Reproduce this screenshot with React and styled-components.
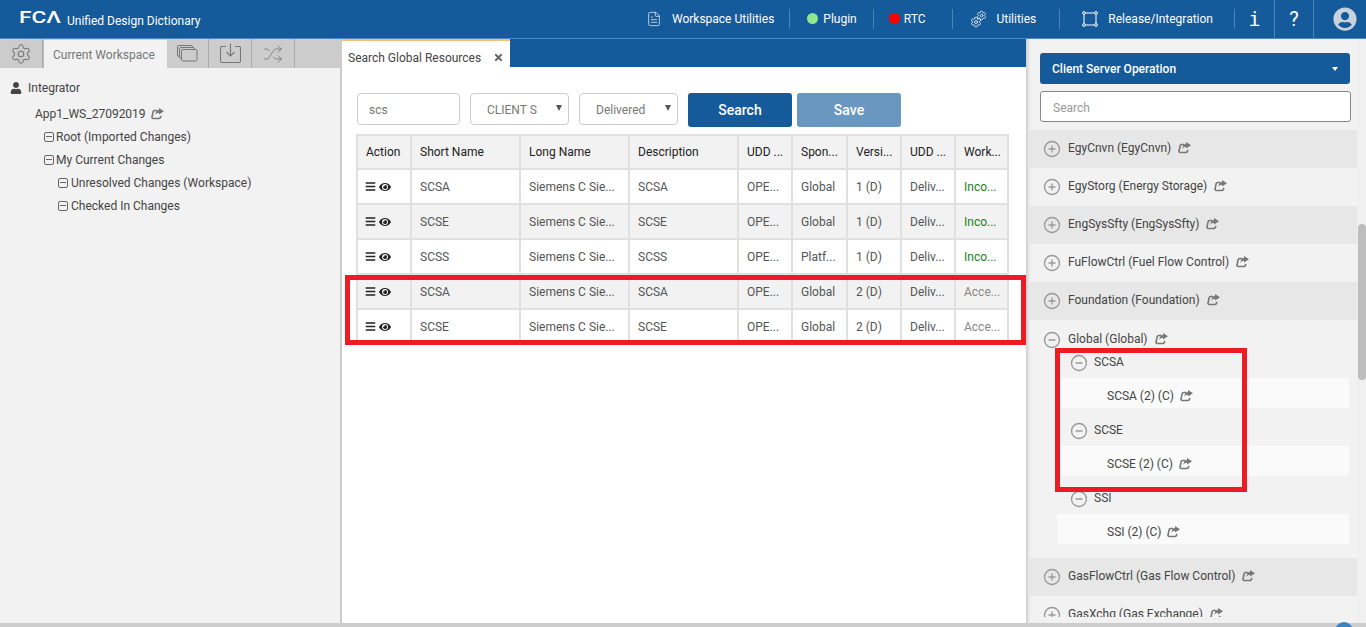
import React from "react";
import styled, { createGlobalStyle } from "styled-components";
import { FaUser, FaEye, FaBars, FaTimes, FaUserCircle } from "react-icons/fa";
import { Settings, Shuffle, FileText, CirclePlus, CircleMinus } from "lucide-react";

const Global = createGlobalStyle`
  html, body { margin: 0; padding: 0; height: 100%; overflow: hidden; }
  body { font-family: Roboto, "Liberation Sans", sans-serif; font-size: 12px; color: #333; background: #f2f2f2; }
  #root { height: 100%; }
  * { box-sizing: border-box; }
`;

const Page = styled.div`display: flex; flex-direction: column; height: 627px; position: relative; overflow: hidden;`;

const Header = styled.header`
  height: 39px; flex: none; background: #155a9a; border-bottom: 1px solid #4b8ac6;
  display: flex; align-items: stretch; color: #fff;
`;
const Brand = styled.div`display: flex; align-items: center; padding: 0 0 0 19px; gap: 7px;`;
const Logo = styled.span`font: 500 16px/1 Roboto, sans-serif; transform: scaleX(1.42); transform-origin: left; width: 41px; margin-top: -3px; white-space: nowrap;`;
const BrandName = styled.span`font-size: 12px; margin-top: 3px;`;
const Nav = styled.nav`margin-left: auto; display: flex; align-items: center; height: 38px;`;
const NavItem = styled.div`
  display: flex; align-items: center; height: 20px; gap: ${p => p.$gap || 5}px; padding: 0 ${p => p.$right}px 0 ${p => p.$left}px;
  border-right: 1px solid #4b84bb; font-size: 12px; white-space: nowrap; margin-top: -1px;
`;
const TallItem = styled.div`
  display: flex; align-items: center; justify-content: center; height: 38px; width: ${p => p.$w}px;
  padding-left: ${p => p.$pl || 0}px;
  border-right: 1px solid ${p => p.$noLine ? "transparent" : "#4b84bb"};
  font: 400 20px/1 ${p => p.$mono ? '"DejaVu Sans Mono", monospace' : 'Roboto, sans-serif'};
`;
const Dot = styled.span`width: 11px; height: 11px; border-radius: 50%; background: ${p => p.$c};`;
const CogPair = styled.span`
  position: relative; width: 17px; height: 18px; flex: none;
  svg { position: absolute; }
  svg:first-child { left: 0; bottom: 0; }
  svg:last-child { right: 0; top: 0; }
`;

const Main = styled.main`flex: 1; min-height: 0; display: flex;`;

const Left = styled.aside`width: 340px; flex: none; background: #f2f2f2; display: flex; flex-direction: column;`;
const LeftTabs = styled.div`height: 29px; flex: none; background: #ccc; display: flex;`;
const IconTab = styled.div`
  width: ${p => p.$w}px; display: flex; align-items: center; justify-content: center; color: #777;
  border-right: 1px solid #aaa;
`;
const ActiveTab = styled.div`
  width: 124px; background: #f2f2f2; border-top: 1px solid #f5c98a; border-left: 1px solid #bbb; color: #777;
  display: flex; align-items: center; padding: 2px 0 0 9px; font-size: 12px;
`;
const Tree = styled.div`padding-top: 8px; color: #444;`;
const TreeRow = styled.div`display: flex; align-items: center; height: 23px; padding-left: ${p => p.$indent}px; gap: ${p => p.$gap || 2}px; margin-bottom: ${p => p.$mb || 0}px;`;
const Box = styled.span`
  width: 10px; height: 10px; border: 1px solid #666; border-radius: 2px; position: relative; flex: none; margin-top: 1px;
  &::after { content: ""; position: absolute; left: 1px; right: 1px; top: 3px; height: 1px; background: #666; }
`;

const Center = styled.section`width: 686px; flex: none; background: #fff; border-left: 2px solid #ccc; display: flex; flex-direction: column;`;
const CenterTabs = styled.div`height: 28px; flex: none; background: #155a9a; display: flex;`;
const CenterTab = styled.div`
  width: 168px; background: #fff; border-top: 2px solid #f9bf6d; display: flex; align-items: center; padding: 7px 6px 0 6px;
  justify-content: space-between; color: #444;
`;
const Close = styled(FaTimes)`width: 11px; height: 11px; color: #666;`;
const Form = styled.div`display: flex; margin: 26px 0 0 15px; height: 32px;`;
const Field = styled.div`
  width: ${p => p.$w}px; margin-right: ${p => p.$mr}px; height: 32px; border: 1px solid #ccc; border-radius: 4px;
  display: flex; align-items: center; justify-content: space-between; padding: 2px 6px 0 ${p => p.$pl}px; color: #777; font-size: 12px;
`;
const Arrow = styled.span`width: 0; height: 0; border-left: 3px solid transparent; border-right: 3px solid transparent; border-top: 6px solid #555; margin-top: -4px;`;
const Btn = styled.button`
  width: 104px; height: 34px; margin-right: 5px; border: 0; border-radius: 3px; color: #fff; font: 500 14px Roboto, sans-serif;
  background: ${p => p.$off ? "#6a97bf" : "#155a9a"};
`;
const Table = styled.table`
  margin: 9px 0 0 14px; width: 651px; table-layout: fixed; border-collapse: collapse; font-size: 12px;
  th, td { border: 2px solid #e0e0e0; height: 35px; padding: 0 8px; text-align: left; white-space: nowrap; overflow: hidden; }
  th { background: #f2f2f2; color: #222; font-weight: 400; height: 34px; }
  td { color: #555; }
  td:first-child { padding-left: 7px; }
  tbody tr:nth-child(even) td { background: #f2f2f2; }
`;
const Status = styled.span`color: ${p => p.$ok ? "#1c801c" : "#888"};`;
const ActionIcons = styled.span`display: flex; align-items: center; gap: 3px; color: #222;`;

const Right = styled.aside`flex: 1; min-width: 0; background: #f2f2f2; position: relative; overflow: hidden; box-shadow: inset 4px 0 3px -2px #ccc;`;
const Drop = styled.div`
  margin: 14px 0 0 14px; width: 310px; height: 31px; background: #155a9a; border-radius: 3px; color: #fff; font-weight: 500;
  display: flex; align-items: center; justify-content: space-between; padding: 0 12px;
`;
const DropArrow = styled.span`width: 0; height: 0; border-left: 3px solid transparent; border-right: 3px solid transparent; border-top: 4px solid #fff;`;
const SearchBox = styled.div`
  margin: 7px 0 0 14px; width: 311px; height: 31px; background: #fff; border: 1px solid #888; border-radius: 3px;
  display: flex; align-items: center; padding: 2px 0 0 12px; color: #999;
`;
const List = styled.div`margin: 8px 9px 0 3px; color: #444; height: 487px; overflow: hidden;`;
const Row = styled.div`
  height: 38px; display: flex; align-items: center; padding: 0 0 3px 14px; gap: 7px; margin-top: ${p => p.$mt || 0}px;
  background: ${p => p.$dark ? "#e6e7e6" : "transparent"};
`;
const GlobalHead = styled.div`height: 28px; padding: 10px 0 0 14px; display: flex; align-items: center; gap: 7px;`;
const Child = styled.div`height: 30px; margin-left: 28px; padding: 0 0 2px 13px; display: flex; align-items: center; gap: 6px;`;
const Sub = styled.div`height: 30px; margin: 0 8px 8px 28px; background: #fafafa; padding: 6px 0 0 50px; display: flex; align-items: center; gap: 6px;`;
const Plus = styled(CirclePlus)`width: 18px; height: 18px; color: #999; flex: none; margin-top: 2px;`;
const Minus = styled(CircleMinus)`width: 18px; height: 18px; color: #999; flex: none; margin-top: 2px;`;
const ScrollThumb = styled.div`position: absolute; right: 0; top: 185px; width: 8px; height: 156px; background: #bdbdbd; border-radius: 4px;`;
const ScrollTrack = styled.div`position: absolute; right: 0; top: 0; bottom: 0; width: 9px; background: #f0f0f0;`;

const Footer = styled.div`height: 4px; flex: none; background: #ccc;`;
const Peek = styled.div`position: absolute; left: 1335px; top: 622px; width: 18px; height: 18px; border-radius: 50%; background: #3d83c4;`;
const Mark = styled.div`position: absolute; left: ${p => p.$x}px; top: ${p => p.$y}px; width: ${p => p.$w}px; height: ${p => p.$h}px; border: 5px solid #ed1c24; pointer-events: none;`;

const ShareIcon = () => (
  <svg width="13" height="12" viewBox="0 0 13 12" style={{ flex: "none" }}>
    <path d="M6.5 2.5H3.6a1.6 1.6 0 0 0-1.5 1.2L1.1 8.8A1.3 1.3 0 0 0 2.4 10.5H8a1.6 1.6 0 0 0 1.5-1.2l.3-1.5" fill="none" stroke="#777" strokeWidth="1.6" />
    <path d="M8 0l5 3.2L8 6.6V4.8C6.2 4.8 5 5.6 4.4 7.2 4.4 4.4 5.6 2.4 8 2.1z" fill="#777" />
  </svg>
);
const LayersIcon = () => (
  <svg width="21" height="17" viewBox="0 0 21 17" fill="none" stroke="#777" strokeWidth="1">
    <rect x="0.5" y="0.5" width="15" height="11" rx="1.5" />
    <rect x="2.5" y="2.5" width="15" height="11" rx="1.5" fill="#ccc" />
    <rect x="4.5" y="4.5" width="15.5" height="11.5" rx="1.5" fill="#ccc" />
  </svg>
);
const DownIcon = () => (
  <svg width="21" height="21" viewBox="0 0 21 21" fill="none" stroke="#777" strokeWidth="1.1">
    <path d="M6 3.5H2a1.5 1.5 0 0 0-1.5 1.5v13A1.5 1.5 0 0 0 2 19.5h17a1.5 1.5 0 0 0 1.5-1.5V5A1.5 1.5 0 0 0 19 3.5h-4" />
    <path d="M10.5 .5v12M6.5 9l4 4 4-4" />
  </svg>
);
const ReleaseIcon = () => (
  <svg width="16" height="16" viewBox="0 0 16 16" fill="none" stroke="#fff" strokeWidth="1">
    <circle cx="2" cy="2" r="1.4" /><circle cx="14" cy="2" r="1.4" /><circle cx="2" cy="14" r="1.4" /><circle cx="14" cy="14" r="1.4" />
    <path d="M3.5 2h9M3.5 14h9M2 3.5v9M14 3.5v9" />
  </svg>
);

const rows = [
  ["SCSA", "SCSA", "Global", "1 (D)", "Inco...", true],
  ["SCSE", "SCSE", "Global", "1 (D)", "Inco...", true],
  ["SCSS", "SCSS", "Platf...", "1 (D)", "Inco...", true],
  ["SCSA", "SCSA", "Global", "2 (D)", "Acce...", false],
  ["SCSE", "SCSE", "Global", "2 (D)", "Acce...", false],
];
const groups = ["EgyCnvn (EgyCnvn)", "EgyStorg (Energy Storage)", "EngSysSfty (EngSysSfty)", "FuFlowCtrl (Fuel Flow Control)", "Foundation (Foundation)"];
const children = [["SCSA", "SCSA (2) (C)"], ["SCSE", "SCSE (2) (C)"], ["SSI", "SSI (2) (C)"]];
const widths = [54, 109, 109, 109, 54, 55, 54, 54, 53];

export default function App() {
  return (
    <Page>
      <Global />
      <Header>
        <Brand><Logo>FCΛ</Logo><BrandName>Unified Design Dictionary</BrandName></Brand>
        <Nav>
          <NavItem $left={0} $right={15} $gap={10}><FileText size={16} strokeWidth={1} />Workspace Utilities</NavItem>
          <NavItem $left={17} $right={16}><Dot $c="#8ee88e" />Plugin</NavItem>
          <NavItem $left={15} $right={27} $gap={4}><Dot $c="#f00" />RTC</NavItem>
          <NavItem $left={17} $right={23} $gap={9}>
            <CogPair><Settings size={12} strokeWidth={1.5} /><Settings size={11} strokeWidth={1.5} /></CogPair>Utilities
          </NavItem>
          <NavItem $left={22} $right={21} $gap={10}><ReleaseIcon />Release/Integration</NavItem>
          <TallItem $w={40} $mono>i</TallItem>
          <TallItem $w={39}>?</TallItem>
          <TallItem $w={52} $pl={10} $noLine><FaUserCircle size={24} color="#c6d2de" /></TallItem>
        </Nav>
      </Header>
      <Main>
        <Left>
          <LeftTabs>
            <IconTab $w={43}><Settings size={22} strokeWidth={1.1} /></IconTab>
            <ActiveTab>Current Workspace</ActiveTab>
            <IconTab $w={42}><LayersIcon /></IconTab>
            <IconTab $w={43}><DownIcon /></IconTab>
            <IconTab $w={43}><Shuffle size={20} strokeWidth={1} /></IconTab>
          </LeftTabs>
          <Tree>
            <TreeRow $indent={10} $gap={6} $mb={3}><FaUser size={12} color="#444" />Integrator</TreeRow>
            <TreeRow $indent={35} $gap={5}>App1_WS_27092019<ShareIcon /></TreeRow>
            <TreeRow $indent={44}><Box />Root (Imported Changes)</TreeRow>
            <TreeRow $indent={44}><Box />My Current Changes</TreeRow>
            <TreeRow $indent={58} $gap={3}><Box />Unresolved Changes (Workspace)</TreeRow>
            <TreeRow $indent={58} $gap={3}><Box />Checked In Changes</TreeRow>
          </Tree>
        </Left>
        <Center>
          <CenterTabs>
            <CenterTab>Search Global Resources<Close /></CenterTab>
          </CenterTabs>
          <Form>
            <Field $w={103} $mr={10} $pl={11}>scs</Field>
            <Field $w={99} $mr={10} $pl={16}>CLIENT S<Arrow /></Field>
            <Field $w={99} $mr={10} $pl={16}>Delivered<Arrow /></Field>
            <Btn>Search</Btn>
            <Btn $off>Save</Btn>
          </Form>
          <Table>
            <colgroup>{widths.map((w, i) => <col key={i} style={{ width: w }} />)}</colgroup>
            <thead>
              <tr><th>Action</th><th>Short Name</th><th>Long Name</th><th>Description</th><th>UDD ...</th><th>Spon...</th><th>Versi...</th><th>UDD ...</th><th>Work...</th></tr>
            </thead>
            <tbody>
              {rows.map((r, i) => (
                <tr key={i}>
                  <td><ActionIcons><FaBars size={11} /><FaEye size={12} /></ActionIcons></td>
                  <td>{r[0]}</td><td>Siemens C Sie...</td><td>{r[1]}</td><td>OPE...</td><td>{r[2]}</td><td>{r[3]}</td><td>Deliv...</td>
                  <td><Status $ok={r[5]}>{r[4]}</Status></td>
                </tr>
              ))}
            </tbody>
          </Table>
        </Center>
        <Right>
          <Drop>Client Server Operation<DropArrow /></Drop>
          <SearchBox>Search</SearchBox>
          <List>
            {groups.map((g, i) => (
              <Row key={g} $dark={i % 2 === 0}><Plus strokeWidth={1.8} />{g}<ShareIcon /></Row>
            ))}
            <GlobalHead><Minus strokeWidth={1.8} />Global (Global)<ShareIcon /></GlobalHead>
            {children.map(([a, b]) => (
              <React.Fragment key={a}>
                <Child><Minus strokeWidth={1.8} />{a}</Child>
                <Sub>{b}<ShareIcon /></Sub>
              </React.Fragment>
            ))}
            <Row $dark $mt={14}><Plus strokeWidth={1.8} />GasFlowCtrl (Gas Flow Control)<ShareIcon /></Row>
            <Row><Plus strokeWidth={1.8} />GasXchg (Gas Exchange)<ShareIcon /></Row>
          </List>
          <ScrollTrack /><ScrollThumb />
        </Right>
      </Main>
      <Footer />
      <Peek />
      <Mark $x={345} $y={275} $w={681} $h={70} />
      <Mark $x={1055} $y={348} $w={192} $h={144} />
    </Page>
  );
}
